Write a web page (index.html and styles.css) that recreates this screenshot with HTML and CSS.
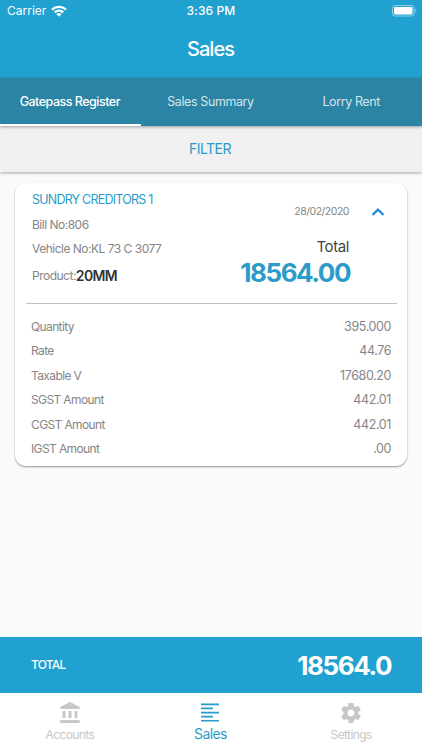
FILE: index.html
```html
<!DOCTYPE html>
<html lang="en">
<head>
<meta charset="utf-8">
<title>Sales</title>
<link rel="stylesheet" href="styles.css">
</head>
<body>
<div class="app">
  <header class="header">
    <div class="status">
      <div class="status-left">
        <span class="carrier">Carrier</span>
        <svg class="wifi" width="16" height="12" viewBox="0 0 16 12"><g fill="none" stroke="#fff" stroke-width="2.2"><path d="M1 4.600a10.200 10.200 0 0 1 14 0"/><path d="M3.700 7.400a6.300 6.300 0 0 1 8.600 0"/></g><path fill="#fff" d="M5.400 9.100a3.800 3.800 0 0 1 5.200 0L8 11.700z"/></svg>
      </div>
      <span class="clock">3:36 PM</span>
      <svg class="battery" width="25" height="12" viewBox="0 0 25 12"><rect x=".5" y=".5" width="21.500" height="10.500" rx="2.800" fill="none" stroke="#fff" stroke-opacity=".5"/><rect x="2" y="2" width="18.500" height="7.500" rx="1.400" fill="#fff"/><path d="M23.200 4v3.600q1.300-.5 1.300-1.800T23.200 4" fill="#fff" fill-opacity=".5"/></svg>
    </div>
    <h1 class="title">Sales</h1>
  </header>
  <nav class="tabs">
    <a class="tab active">Gatepass Register</a>
    <a class="tab">Sales Summary</a>
    <a class="tab">Lorry Rent</a>
  </nav>
  <div class="filter">FILTER</div>
  <main class="content">
    <section class="card">
      <div class="summary">
        <div class="info">
          <div class="party">SUNDRY CREDITORS 1</div>
          <div class="line">Bill No:806</div>
          <div class="line">Vehicle No:KL 73 C 3077</div>
          <div class="line product"><span>Product:</span><b>20MM</b></div>
        </div>
        <div class="amounts">
          <span class="date">28/02/2020</span>
          <span class="total-label">Total</span>
          <span class="total">18564.00</span>
        </div>
        <svg class="chevron" width="14" height="10" viewBox="0 0 14 10"><path d="M1.500 8 7 2.600 12.500 8" fill="none" stroke="#2089dc" stroke-width="2.200"/></svg>
      </div>
      <dl class="details">
        <div class="row"><dt>Quantity</dt><dd>395.000</dd></div>
        <div class="row"><dt>Rate</dt><dd>44.76</dd></div>
        <div class="row"><dt>Taxable V</dt><dd>17680.20</dd></div>
        <div class="row"><dt>SGST Amount</dt><dd>442.01</dd></div>
        <div class="row"><dt>CGST Amount</dt><dd>442.01</dd></div>
        <div class="row"><dt>IGST Amount</dt><dd>.00</dd></div>
      </dl>
    </section>
  </main>
  <div class="totalbar"><span class="tb-label">TOTAL</span><span class="tb-value">18564.0</span></div>
  <nav class="bottom">
    <a class="item"><svg width="24" height="24" viewBox="0 0 24 24"><path fill="currentColor" d="M4.500 10v7h3v-7h-3zm6 0v7h3v-7h-3zM2.200 22h19.500v-3H2.200v3zm14.300-12v7h3v-7h-3zM12 1 2.200 6v2h19.500V6L12 1z"/></svg><span>Accounts</span></a>
    <a class="item on"><svg width="24" height="24" viewBox="0 0 24 24"><path fill="currentColor" d="M3 2.500h18v1.700H3zM3 6.600h12v1.700H3zM3 10.700h18v1.700H3zM3 14.800h12v1.700H3zM3 18.900h18v1.700H3z"/></svg><span class="sales">Sales</span></a>
    <a class="item"><svg width="24" height="24" viewBox="0 0 24 24"><path fill="currentColor" d="M19.430 12.980c.04-.32.07-.64.07-.98s-.03-.66-.07-.98l2.110-1.650c.19-.15.24-.42.12-.64l-2-3.460c-.12-.22-.39-.3-.61-.22l-2.490 1c-.52-.4-1.080-.73-1.690-.98l-.38-2.650C14.460 2.180 14.250 2 14 2h-4c-.25 0-.46.18-.49.42l-.38 2.650c-.61.25-1.170.59-1.690.98l-2.490-1c-.23-.09-.49 0-.61.22l-2 3.460c-.13.22-.07.49.12.64l2.110 1.650c-.04.32-.07.65-.07.98s.03.66.07.98l-2.110 1.650c-.19.15-.24.42-.12.64l2 3.460c.12.22.39.3.61.22l2.490-1c.52.4 1.080.73 1.690.98l.38 2.650c.03.24.24.42.49.42h4c.25 0 .46-.18.49-.42l.38-2.650c.61-.25 1.170-.59 1.690-.98l2.490 1c.23.09.49 0 .61-.22l2-3.460c.12-.22.07-.49-.12-.64l-2.110-1.650zM12 15.500c-1.930 0-3.500-1.570-3.500-3.500s1.570-3.500 3.500-3.500 3.500 1.570 3.500 3.500-1.570 3.500-3.500 3.500z"/></svg><span>Settings</span></a>
  </nav>
</div>
</body>
</html>
```
FILE: styles.css
```css
* { box-sizing: border-box; }
body { margin: 0; font-family: Inter, "Liberation Sans", sans-serif; }
h1, dl, dt, dd { margin: 0; }
svg { display: block; flex: none; }
.app { width: 422px; height: 750px; display: flex; flex-direction: column; background: #fafafa; overflow: hidden; white-space: nowrap; }
.header { height: 78px; background: #21a1d0; color: #fff; flex: none; }
.status { height: 21px; display: grid; grid-template-columns: 1fr auto 1fr; padding: 0 5px 0 7px; align-items: center; font-size: 12px; }
.status-left { display: flex; align-items: center; gap: 5px; }
.carrier { letter-spacing: 0; }
.clock { font-weight: 500; letter-spacing: .1px; margin-right: 2px; }
.battery { justify-self: end; }
.title { height: 57px; font-size: 20px; line-height: 57px; font-weight: 500; text-align: center; letter-spacing: -1px; padding-right: 1px; }
.tabs { height: 48px; flex: none; display: grid; grid-template-columns: repeat(3, 1fr); background: #2c84a5; position: relative; z-index: 2; box-shadow: 0 1px 3px rgba(0,0,0,.35); }
.tab { display: flex; align-items: center; justify-content: center; color: #d3e5ed; font-size: 12.500px; border-bottom: 2px solid transparent; letter-spacing: -.4px; padding-right: 1px; }
.tab.active { color: #fff; border-color: #fff; font-weight: 500; letter-spacing: -.5px; }
.filter { height: 46px; flex: none; background: #f0f0f0; color: #2b9bca; display: flex; align-items: center; justify-content: center; font-size: 14px; letter-spacing: -.5px; box-shadow: 0 1px 3px rgba(0,0,0,.35); position: relative; z-index: 1; padding: 0 2px 1px 0; }
.content { flex: 1; padding: 11px 15px; }
.card { height: 283px; background: #fff; border-radius: 11px; box-shadow: 0 1px 2px rgba(0,0,0,.4); padding: 0 10px 0 11px; }
.summary { height: 121px; display: flex; border-bottom: 1px solid #c0c0c0; padding-left: 6px; }
.info { width: 179px; padding-top: 5px; color: #858585; font-size: 12.500px; }
.party { height: 24.500px; line-height: 24.500px; color: #2b9bca; letter-spacing: -.78px; }
.line { height: 24.500px; line-height: 24.500px; font-size: 12px; letter-spacing: -.5px; }
.product { height: 27px; line-height: 27px; display: flex; letter-spacing: -.5px; }
.product b { color: #333; font-size: 14px; font-weight: 600; letter-spacing: -.7px; }
.amounts { width: 140px; display: flex; flex-direction: column; align-items: flex-end; }
.date { font-size: 10.500px; color: #858585; line-height: 14px; margin-top: 22px; letter-spacing: -.48px; margin-right: 2px; }
.total-label { font-size: 15px; color: #444; line-height: 20px; margin-top: 18px; letter-spacing: -.4px; margin-right: 2px; }
.total { font-size: 26px; font-weight: 700; color: #2b9bca; line-height: 31px; letter-spacing: -1.450px; margin-right: 1px; }
.chevron { margin: 24px 0 0 20px; }
.details { padding: 10px 5px 0; }
.row { height: 24.500px; display: flex; justify-content: space-between; align-items: center; color: #858585; font-size: 12.500px; }
.row dt { font-size: 12px; letter-spacing: -.62px; }
.row dd { letter-spacing: -.4px; margin-right: 1px; }
.totalbar { height: 56px; flex: none; background: #21a1d0; color: #fff; display: flex; justify-content: space-between; align-items: center; padding: 0 31px 0 31px; }
.tb-label { font-size: 12px; font-weight: 500; letter-spacing: -.75px; padding-bottom: 1px; }
.tb-value { font-size: 26px; font-weight: 700; letter-spacing: -1.450px; }
.bottom { height: 57px; flex: none; display: grid; grid-template-columns: repeat(3, 1fr); background: #fff; }
.item { display: flex; flex-direction: column; align-items: center; padding: 8px 1px 0 0; color: #c8c8c8; font-size: 12px; letter-spacing: -.6px; }
.item span { line-height: 18px; margin-top: 1px; }
.item.on { color: #2b9bca; }
.item .sales { font-size: 14px; letter-spacing: -.6px; margin-top: 0; }
```
